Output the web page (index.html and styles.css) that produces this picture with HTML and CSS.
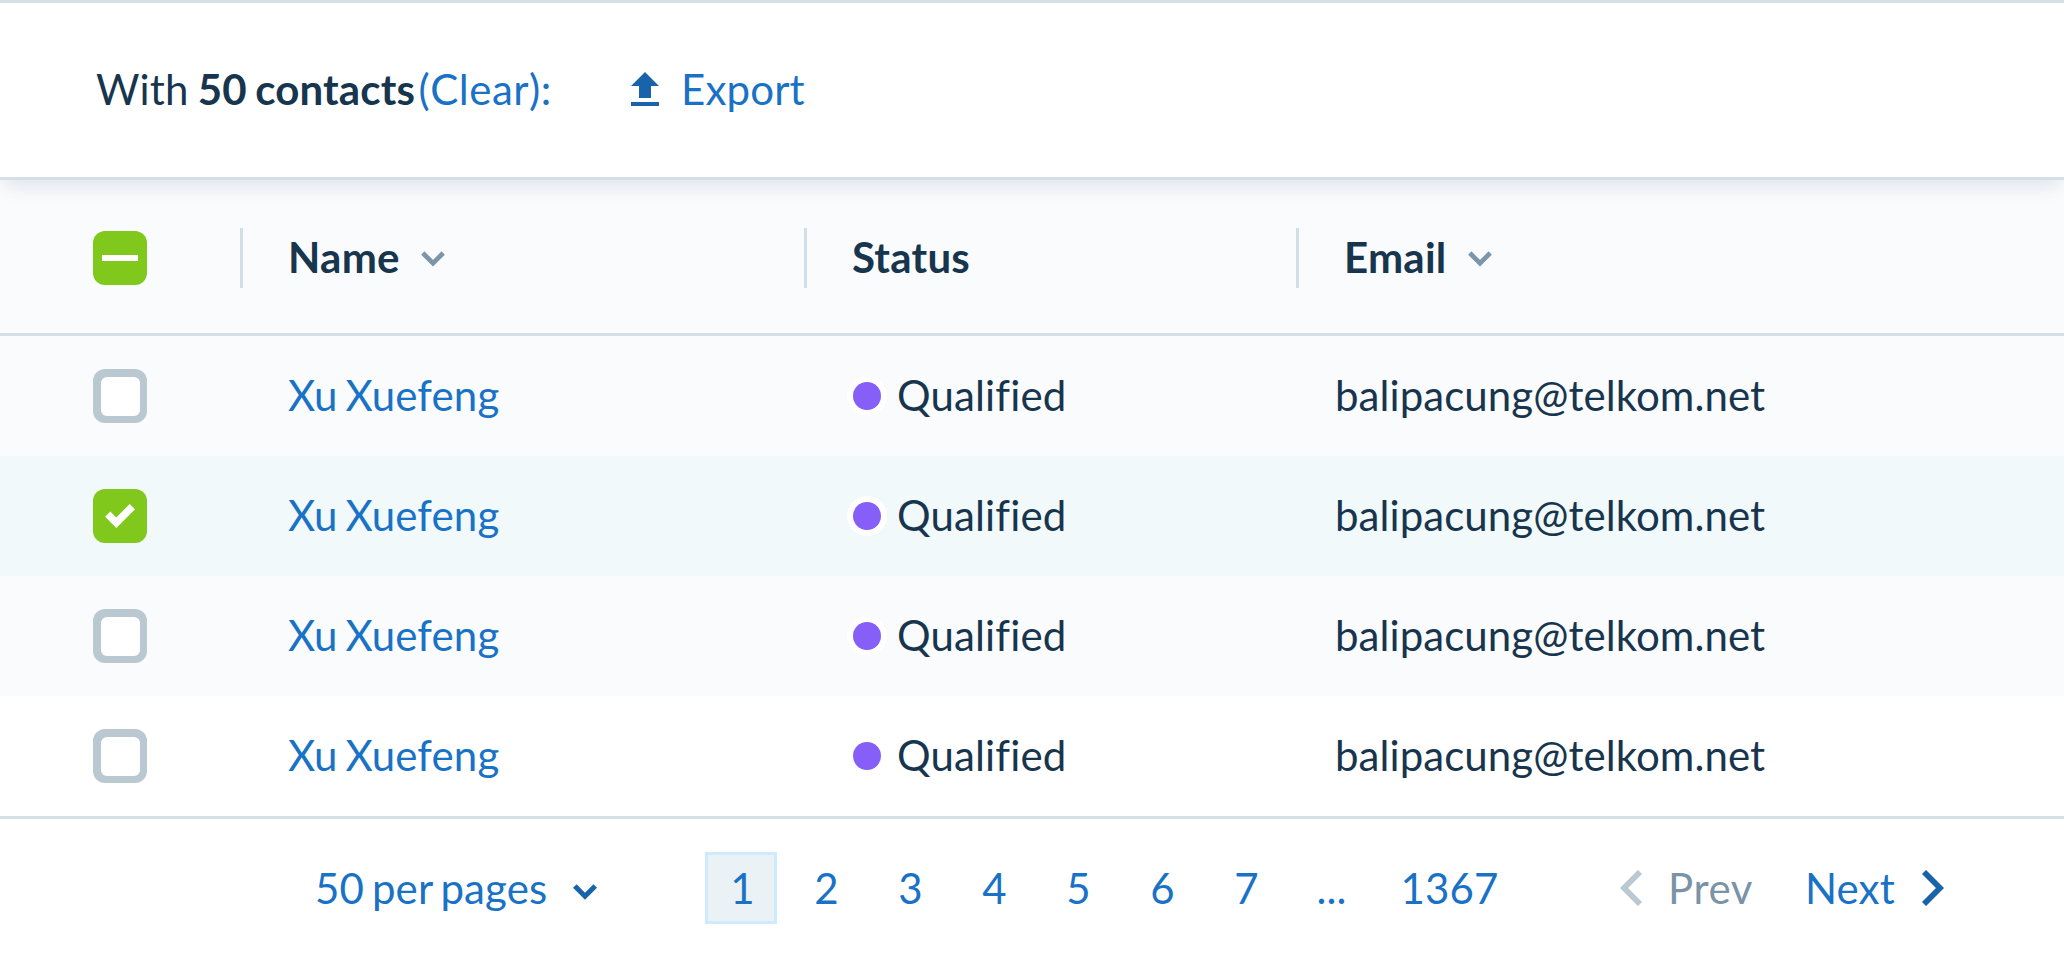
FILE: index.html
```html
<!DOCTYPE html>
<html lang="en">
<head>
<meta charset="utf-8">
<title>Contacts</title>
<link rel="stylesheet" href="styles.css">
</head>
<body>
<div class="bulk-bar">
  <p class="selection">With <strong>50 contacts</strong><a class="link clear">(Clear):</a></p>
  <a class="link export">
    <svg class="export-icon" width="28" height="34" viewBox="0 0 28 34"><path d="M14 0L28 14H20V26H8V14H0ZM0 30H28V34H0Z"/></svg>
    <span>Export</span>
  </a>
</div>
<div class="table">
  <div class="row head">
    <div class="cell pick"><span class="box on"><svg width="54" height="54" viewBox="0 0 54 54"><path d="M9 24H45V30H9Z"/></svg></span></div>
    <div class="cell name">Name<svg class="sort" width="24" height="16" viewBox="0 0 24 16"><path d="M1.8 2L12 12.2L22.2 2"/></svg></div>
    <div class="cell status">Status</div>
    <div class="cell email">Email<svg class="sort" width="24" height="16" viewBox="0 0 24 16"><path d="M1.8 2L12 12.2L22.2 2"/></svg></div>
  </div>
  <div class="row tinted">
    <div class="cell pick"><span class="box"></span></div>
    <div class="cell name"><a class="link">Xu Xuefeng</a></div>
    <div class="cell status"><i class="dot"></i>Qualified</div>
    <div class="cell email">balipacung@telkom.net</div>
  </div>
  <div class="row selected">
    <div class="cell pick"><span class="box on"><svg width="54" height="54" viewBox="0 0 54 54"><path d="M12.2 27.7L17.3 22.6L23.3 28.4L36.7 15L42 20.3L23.3 39Z"/></svg></span></div>
    <div class="cell name"><a class="link">Xu Xuefeng</a></div>
    <div class="cell status"><i class="dot"></i>Qualified</div>
    <div class="cell email">balipacung@telkom.net</div>
  </div>
  <div class="row tinted">
    <div class="cell pick"><span class="box"></span></div>
    <div class="cell name"><a class="link">Xu Xuefeng</a></div>
    <div class="cell status"><i class="dot"></i>Qualified</div>
    <div class="cell email">balipacung@telkom.net</div>
  </div>
  <div class="row">
    <div class="cell pick"><span class="box"></span></div>
    <div class="cell name"><a class="link">Xu Xuefeng</a></div>
    <div class="cell status"><i class="dot"></i>Qualified</div>
    <div class="cell email">balipacung@telkom.net</div>
  </div>
</div>
<div class="pager">
  <a class="link per-page">50 per pages<svg class="drop" width="24" height="16" viewBox="0 0 24 16"><path d="M1.8 2L12 12.2L22.2 2"/></svg></a>
  <div class="pages">
    <a class="page current">1</a><a class="page">2</a><a class="page">3</a><a class="page">4</a><a class="page">5</a><a class="page">6</a><a class="page">7</a><a class="page more">...</a><a class="page last">1367</a>
  </div>
  <a class="prev"><svg width="22" height="36" viewBox="0 0 22 36"><path d="M20 2L4 18L20 34"/></svg>Prev</a>
  <a class="next link">Next<svg width="22" height="36" viewBox="0 0 22 36"><path d="M2 2L18 18L2 34"/></svg></a>
</div>
</body>
</html>
```
FILE: styles.css
```css
* { box-sizing: border-box; }

body {
  margin: 0;
  height: 960px;
  overflow: hidden;
  background: #fff;
  color: #18354e;
  font: 42px/50px Lato, "Liberation Sans", sans-serif;
  font-variant-ligatures: none;
  letter-spacing: 0.15px;
  word-spacing: -3px;
  white-space: nowrap;
}

svg { flex: none; display: block; }
.link { color: #1972c5; }

.bulk-bar {
  position: relative;
  z-index: 1;
  display: flex;
  align-items: center;
  height: 180px;
  padding: 0 0 2px 96px;
  background: #fff;
  border-top: 3px solid #d5dfe6;
  border-bottom: 3px solid #d5dfe6;
  box-shadow: 0 9px 18px -4px rgba(24, 72, 96, 0.13);
}
.selection { margin: 0; width: 535px; word-spacing: -1.8px; }
.selection strong { font-weight: 700; }
.clear { margin-left: 3.5px; font-kerning: none; letter-spacing: 0.5px; }
.export { display: flex; align-items: center; gap: 22px; }
.export-icon { fill: #1863a9; }

.row {
  display: grid;
  grid-template-columns: 240px 564px 492px 1fr;
  height: 120px;
}
.tinted { background: #fafbfd; }
.selected { background: #f1f9fb; }
.head {
  height: 156px;
  background: #fafbfd;
  border-bottom: 3px solid #d5dfe6;
  padding-top: 48px;
  font-weight: 700;
  letter-spacing: 0.25px;
}
.cell { display: flex; align-items: center; padding-left: 48px; padding-bottom: 2px; }
.cell.pick { padding: 0 0 0 93px; }
.cell.email { padding-left: 39px; }
.row:not(.head) .email { letter-spacing: 0.07px; }
.head .cell { height: 60px; }
.head .cell:not(.pick) { border-left: 3px solid #d3dfe5; padding-left: 45px; }

.box {
  width: 54px;
  height: 54px;
  padding: 7.5px;
  border-radius: 12px;
  background: #bac8d1;
}
.box::before {
  content: "";
  display: block;
  width: 39px;
  height: 39px;
  border-radius: 6px;
  background: #fff;
}
.box.on { padding: 0; background: #80c91c; fill: #fff; }
.box.on::before { display: none; }

.sort { margin: 3px 0 0 21px; fill: none; stroke: #7b95aa; stroke-width: 4.6; }
.dot {
  width: 28px;
  height: 28px;
  margin: 1px 16px 0 1px;
  border-radius: 50%;
  background: #865ef8;
  box-shadow: 0 0 0 6px #fff;
}

.pager {
  display: flex;
  align-items: center;
  height: 141px;
  padding-left: 315px;
  border-top: 3px solid #d5dfe6;
}
.per-page { display: flex; align-items: center; width: 390px; padding-bottom: 1px; }
.drop { margin: 8px 0 0 26px; fill: none; stroke: #1863a9; stroke-width: 5; }
.pages { display: flex; gap: 12px; width: 915px; color: #1972c5; }
.page {
  display: flex;
  align-items: center;
  justify-content: center;
  width: 72px;
  height: 72px;
  padding: 0 0 1px 3px;
}
.current { background: #ebf2f5; border: 3px solid #cfe9ff; padding: 0 0 1px 3px; }
.page.more { padding-left: 5px; }
.page.last { width: 108px; margin-left: 17px; }
.prev, .next { display: flex; align-items: center; fill: none; stroke-width: 5.8; }
.prev { gap: 26px; width: 185px; color: #7b93a7; stroke: #bac8d1; letter-spacing: 0.6px; }
.next { gap: 27px; stroke: #1863a9; }
```
